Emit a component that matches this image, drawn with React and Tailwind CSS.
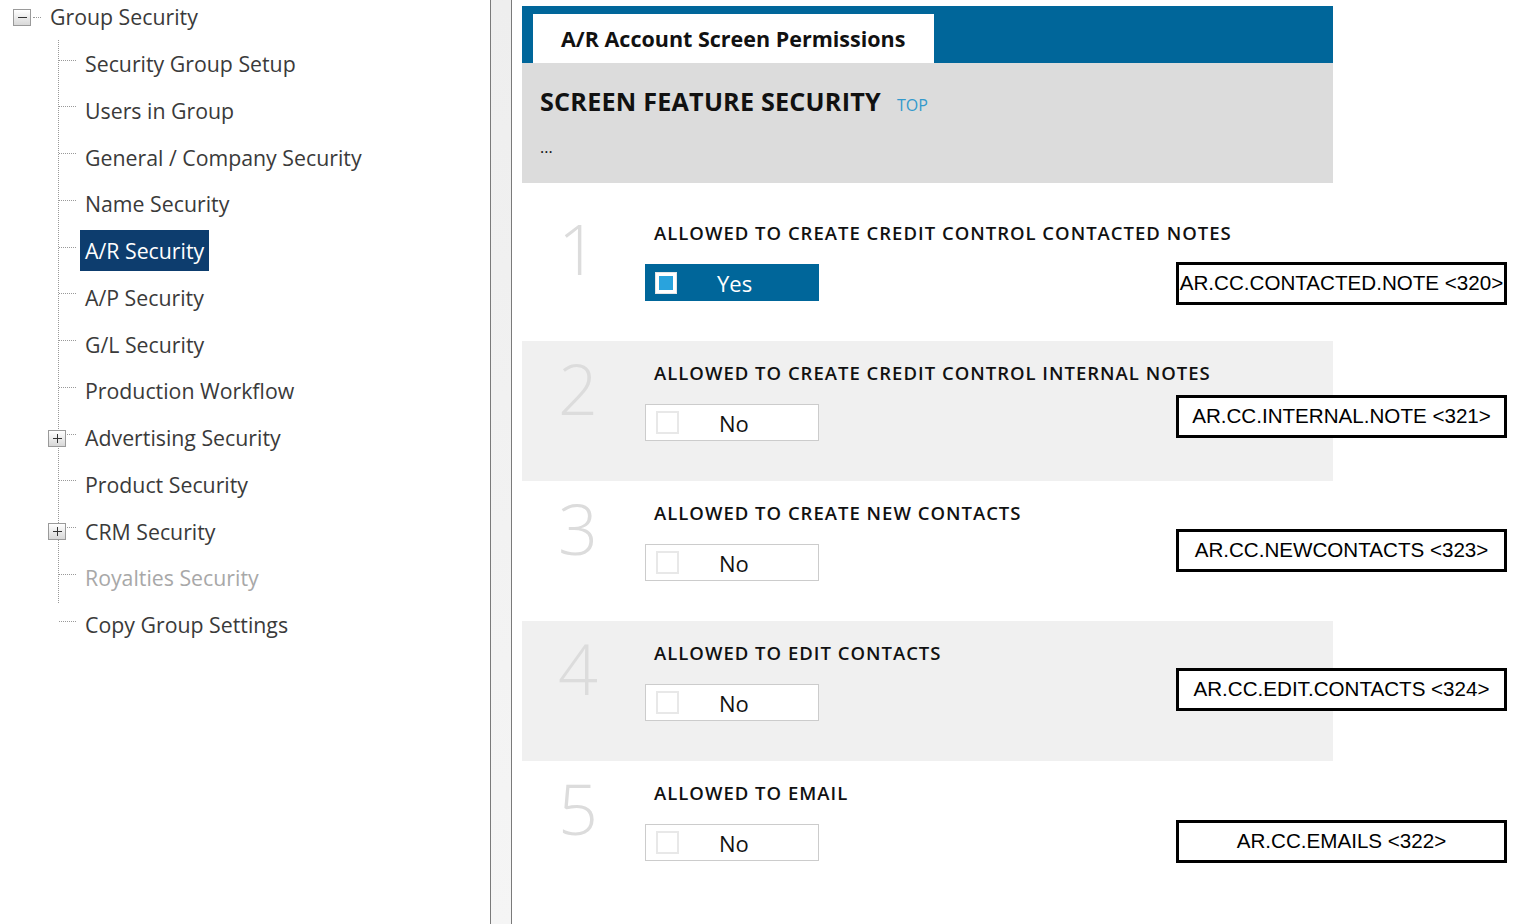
import React from 'react';

const treeItems = [
  { label: 'Security Group Setup' },
  { label: 'Users in Group' },
  { label: 'General / Company Security' },
  { label: 'Name Security' },
  { label: 'A/R Security', active: true },
  { label: 'A/P Security' },
  { label: 'G/L Security' },
  { label: 'Production Workflow' },
  { label: 'Advertising Security', expander: true },
  { label: 'Product Security' },
  { label: 'CRM Security', expander: true },
  { label: 'Royalties Security', disabled: true },
  { label: 'Copy Group Settings' },
];

const permissions = [
  { n: 1, title: 'ALLOWED TO CREATE CREDIT CONTROL CONTACTED NOTES', on: true, code: 'AR.CC.CONTACTED.NOTE <320>', top: 'top-[61px]' },
  { n: 2, title: 'ALLOWED TO CREATE CREDIT CONTROL INTERNAL NOTES', code: 'AR.CC.INTERNAL.NOTE <321>', top: 'top-[54px]', shaded: true },
  { n: 3, title: 'ALLOWED TO CREATE NEW CONTACTS', code: 'AR.CC.NEWCONTACTS <323>', top: 'top-[48px]' },
  { n: 4, title: 'ALLOWED TO EDIT CONTACTS', code: 'AR.CC.EDIT.CONTACTS <324>', top: 'top-[47px]', shaded: true },
  { n: 5, title: 'ALLOWED TO EMAIL', code: 'AR.CC.EMAILS <322>', top: 'top-[59px]' },
];

const TreeBox = ({ minus }) => (
  <span className="w-[18px] h-[17px] border border-[#9a9a9a] bg-gradient-to-b from-white to-[#d8d8d8] flex items-center justify-center shrink-0">
    <span className="relative w-[9px] h-[9px] flex items-center justify-center">
      <span className="absolute w-[9px] h-[1px] bg-[#333]" />
      {!minus && <span className="absolute w-[1px] h-[9px] bg-[#333]" />}
    </span>
  </span>
);

const Tree = () => (
  <div className="w-[490px] shrink-0 bg-white">
    <div className="h-[34px] flex items-center pl-[13px]">
      <TreeBox minus />
      <span className="w-[8px] border-t border-dotted border-[#999] ml-[2px]" />
      <span className="ml-[9px] text-[21.3px] text-[#3a3a3a]">Group Security</span>
    </div>
    <div className="relative mt-[6.6px]">
      <div className="absolute left-[58px] top-[-1px] h-[563px] border-l border-dotted border-[#999]" />
      {treeItems.map((item) => (
        <div key={item.label} className="relative h-[46.75px] flex items-center">
          <span className="absolute left-[59px] top-[19px] w-[17px] border-t border-dotted border-[#999]" />
          {item.expander && (
            <span className="absolute left-[48px] top-[15px]">
              <TreeBox />
            </span>
          )}
          <span
            className={
              'ml-[80px] px-[5px] h-[41px] flex items-center text-[21.3px] ' +
              (item.active
                ? 'bg-[#0d3d6e] text-white'
                : item.disabled
                ? 'text-[#a8a8a8]'
                : 'text-[#3a3a3a]')
            }
          >
            {item.label}
          </span>
        </div>
      ))}
    </div>
  </div>
);

const Row = ({ p }) => (
  <div className={'relative h-[140px] flex ' + (p.shaded ? 'bg-[#f0f0f0]' : 'bg-white')}>
    <div className="w-[112px] pt-[2px] text-center text-[70px] font-light leading-[90px] text-[#dcdcdc]">
      {p.n}
    </div>
    <div className="pl-[11px] pt-[21px]">
      <div className="pl-[9px] h-[22px] flex items-center text-[18.5px] font-semibold tracking-[1px] text-[#111] whitespace-nowrap">
        {p.title}
      </div>
      <div
        className={
          'mt-[20px] w-[174px] h-[37px] flex items-center ' +
          (p.on ? 'bg-[#00669a] text-white' : 'bg-white border border-[#cccccc] text-[#111]')
        }
      >
        {p.on ? (
          <span className="ml-[10px] w-[22px] h-[22px] bg-white border border-[#e6e6e6] flex items-center justify-center">
            <span className="w-[14px] h-[14px] bg-[#29a3dd]" />
          </span>
        ) : (
          <span className="ml-[10px] w-[23px] h-[23px] bg-white border-2 border-[#e8e8e8]" />
        )}
        <span className="ml-[40px] text-[22px] leading-none">{p.on ? 'Yes' : 'No'}</span>
      </div>
    </div>
    <div
      className={
        'absolute left-[654px] ' +
        p.top +
        ' w-[331px] h-[43px] border-[3px] border-black bg-white flex items-center justify-center text-[20.6px] text-black whitespace-nowrap'
      }
      style={{ fontFamily: '"Liberation Sans", Arial, sans-serif' }}
    >
      {p.code}
    </div>
  </div>
);

export default function App() {
  return (
    <div className="flex h-[924px] overflow-hidden bg-white" style={{ fontFamily: '"Open Sans", "Noto Sans", sans-serif' }}>
      <Tree />
      <div className="w-[22px] shrink-0 border-x border-[#7a7a7a] bg-gradient-to-b from-[#eeeeee] to-[#f5f5f5]" />
      <div className="flex-1 pl-[10px] pt-[6px]">
        <div className="w-[811px]">
          <div className="h-[57px] bg-[#00669a] pl-[11px] pt-[8px]">
            <div className="w-[401px] h-[49px] bg-white pl-[28px] pt-[2px] flex items-center text-[21.5px] font-bold text-[#111]">
              A/R Account Screen Permissions
            </div>
          </div>
          <div className="h-[120px] bg-[#dcdcdc] pl-[18px] pt-[20px]">
            <div className="flex items-baseline">
              <span className="text-[25.2px] font-bold text-[#111] tracking-[0.2px]">SCREEN FEATURE SECURITY</span>
              <span className="ml-[16px] text-[16px] text-[#3399cc]">TOP</span>
            </div>
            <div className="mt-[14px] text-[16px] text-[#111]">...</div>
          </div>
          <div className="h-[18px]" />
          {permissions.map((p) => (
            <Row key={p.n} p={p} />
          ))}
        </div>
      </div>
    </div>
  );
}
